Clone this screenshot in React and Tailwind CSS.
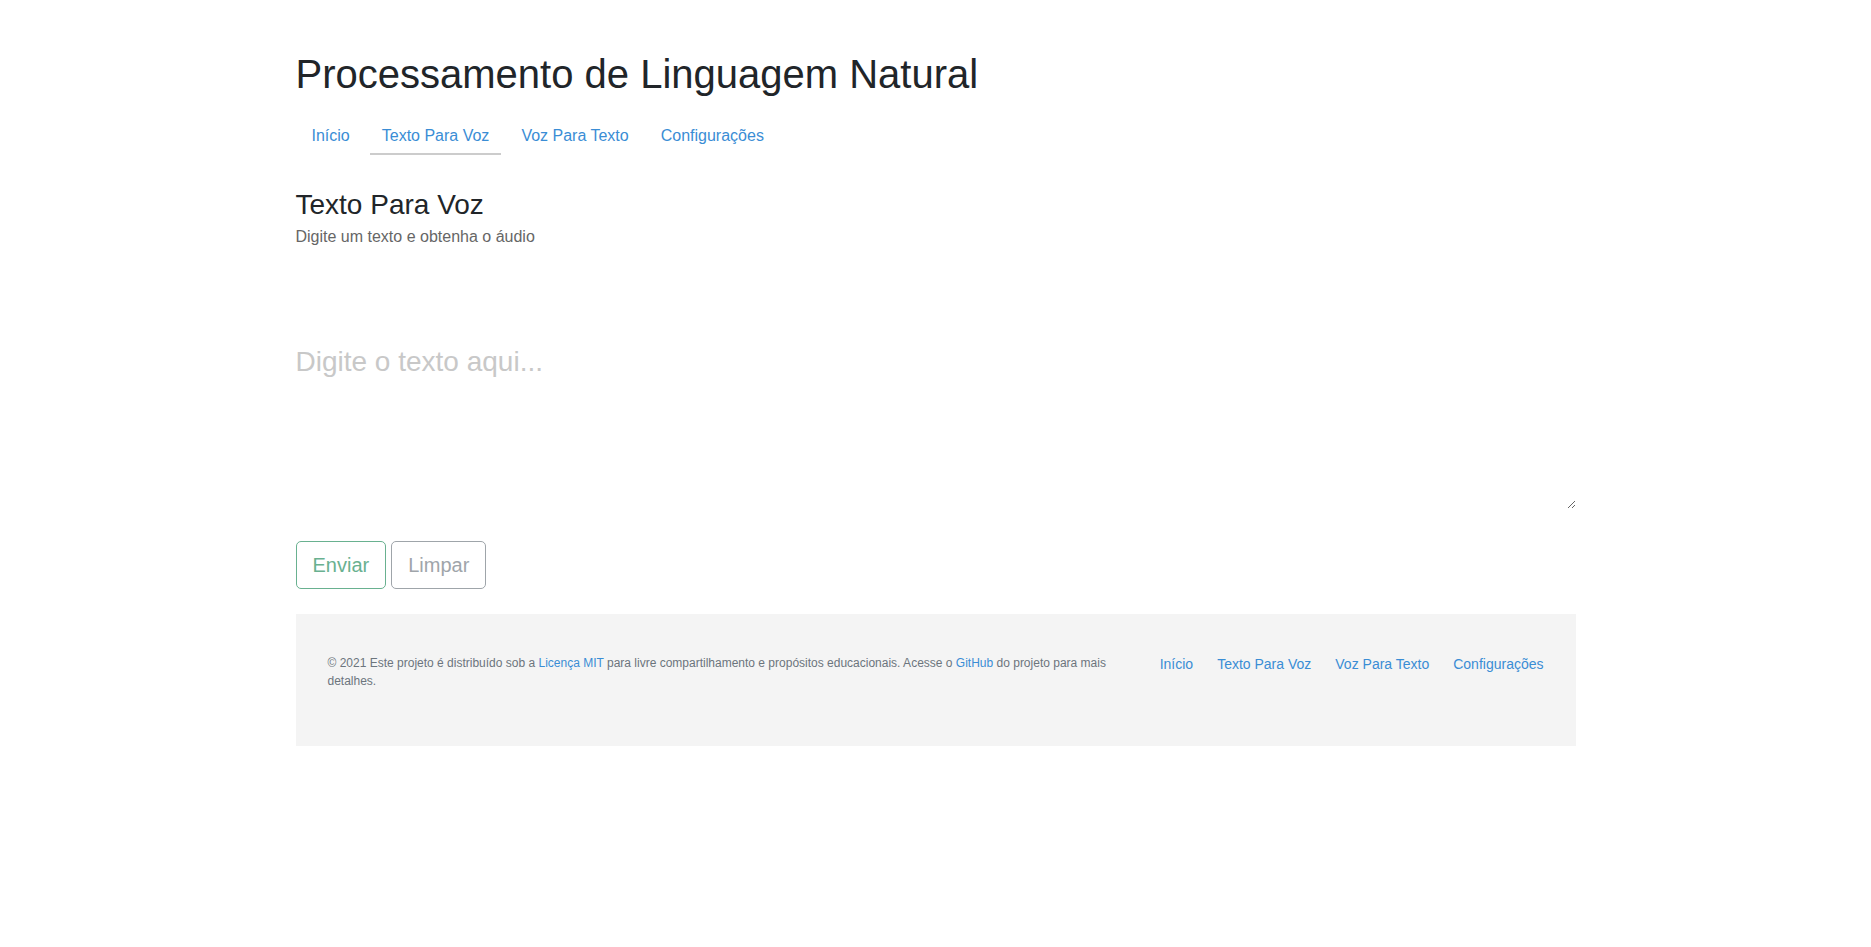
import React, { useState } from 'react';

const tabs = ['Início', 'Texto Para Voz', 'Voz Para Texto', 'Configurações'];

const App = () => {
  const [text, setText] = useState('');
  const active = 'Texto Para Voz';

  return (
    <div className="min-h-screen bg-white font-['Liberation_Sans',Arial,sans-serif] text-[#212529]">
      <div className="mx-auto w-[1280px] pt-[50px]">
        <h1 className="text-[40px] leading-[1.2] font-normal">Processamento de Linguagem Natural</h1>

        <ul className="flex mt-[18px]">
          {tabs.map((tab) => (
            <li key={tab} className="px-1">
              <a
                href="#"
                className={`block px-3 pt-2 pb-[5px] text-[16px] leading-[24px] text-[#3a8dd5] border-b-2 ${
                  tab === active ? 'border-[#cccccc]' : 'border-transparent'
                }`}
              >
                {tab}
              </a>
            </li>
          ))}
        </ul>

        <h3 className="mt-[33px] text-[28px] leading-[1.2] font-normal">Texto Para Voz</h3>
        <p className="mt-[3px] text-[16px] leading-[24px] text-[#666666]">Digite um texto e obtenha o áudio</p>

        <textarea
          value={text}
          onChange={(e) => setText(e.target.value)}
          placeholder="Digite o texto aqui..."
          className="block w-full h-[168px] mt-[92px] p-0 border-0 outline-none resize-y text-[28px] leading-[1.5] text-[#212529] placeholder:text-[#c8c8c8]"
        />

        <div className="flex gap-[5px] mt-[32px]">
          <button className="px-4 py-2 text-[20px] leading-[30px] border border-[#69b190] text-[#69b190] rounded-[5px] bg-white">
            Enviar
          </button>
          <button
            onClick={() => setText('')}
            className="px-4 py-2 text-[20px] leading-[30px] border border-[#9fa5aa] text-[#9fa5aa] rounded-[5px] bg-white"
          >
            Limpar
          </button>
        </div>

        <footer className="mt-[25px] bg-[#f4f4f4] px-8 pt-10 pb-[56px] flex items-start">
          <p className="flex-1 mr-8 text-[12px] leading-[18px] text-[#6c757d]">
            © 2021 Este projeto é distribuído sob a{' '}
            <a href="#" className="text-[#3a8dd5]">Licença MIT</a> para livre compartilhamento e propósitos
            educacionais. Acesse o <a href="#" className="text-[#3a8dd5]">GitHub</a> do projeto para mais detalhes.
          </p>
          <nav className="flex gap-6 text-[14px] leading-[21px]">
            {tabs.map((tab) => (
              <a key={tab} href="#" className="text-[#3a8dd5]">
                {tab}
              </a>
            ))}
          </nav>
        </footer>
      </div>
    </div>
  );
};

export default App;
